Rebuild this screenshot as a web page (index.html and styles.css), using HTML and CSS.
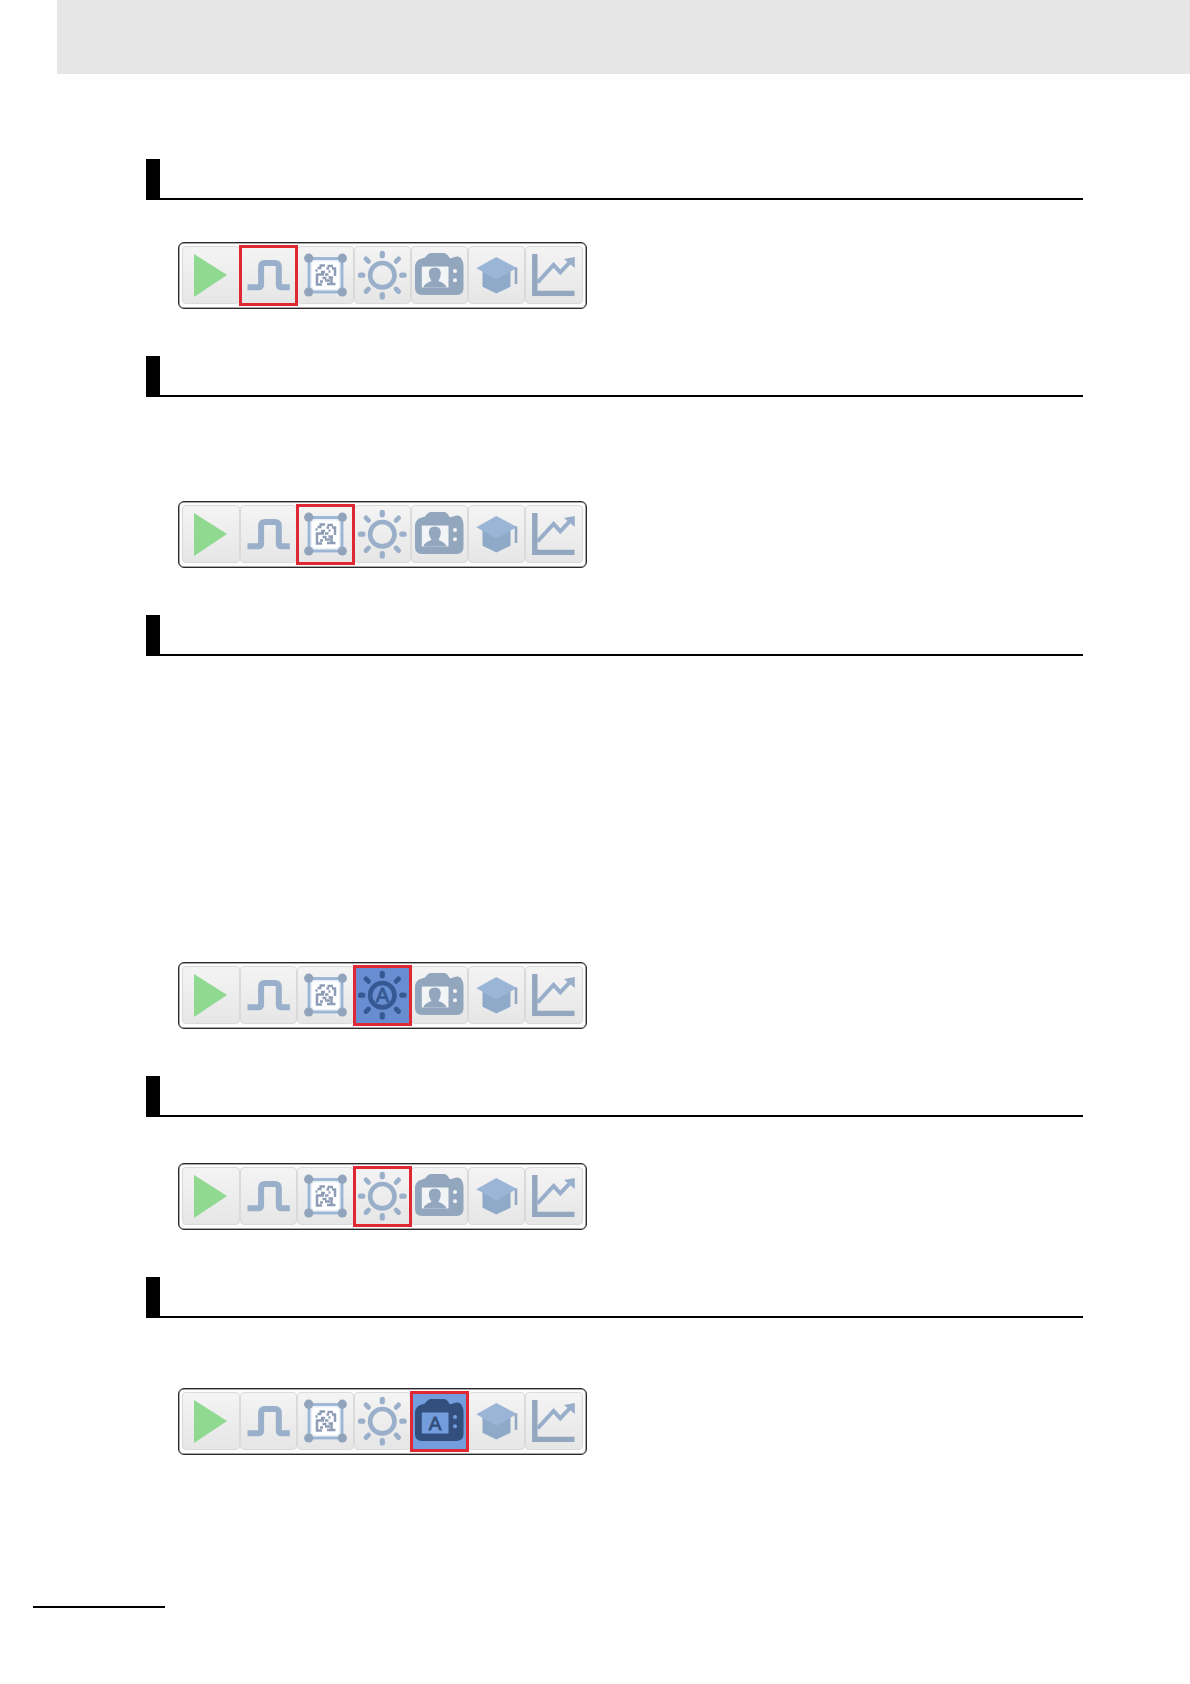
FILE: index.html
```
<!DOCTYPE html>
<html lang="en">
<head>
  <meta charset="UTF-8">
  <meta name="viewport" content="width=device-width, initial-scale=1.0">
  <title>Toolbar</title>
  <link rel="stylesheet" href="styles.css">
</head>
<body>
  <header class="page-header"></header>

  <main class="page-main" id="main">
    <section class="section">
      <div class="heading"></div>
      <div class="toolbar" data-mark="pulse"></div>
    </section>
    <section class="section section-frame">
      <div class="heading"></div>
      <div class="toolbar" data-mark="frame"></div>
    </section>
    <section class="section section-auto-light">
      <div class="heading"></div>
      <div class="toolbar" data-mark="light" data-auto="true"></div>
    </section>
    <section class="section section-light">
      <div class="heading"></div>
      <div class="toolbar" data-mark="light"></div>
    </section>
    <section class="section section-camera">
      <div class="heading"></div>
      <div class="toolbar" data-mark="camera" data-auto="true"></div>
    </section>
  </main>

  <footer class="page-footer"></footer>

  <!-- toolbar icons, one template for each button -->
  <template id="icon-play">
    <svg viewBox="0 0 57 58"><path d="M12 8 45 29 12 51Z" fill="#8fd991"/></svg>
  </template>
  <template id="icon-pulse">
    <svg viewBox="0 0 57 58">
      <path d="M7.5 41.3H18.3Q21.1 41.3 21.1 38.5V21Q21.1 17 25.1 17H34.8Q38.8 17 38.8 21V38.5Q38.8 41.3 41.6 41.3H49.8" fill="none" stroke="currentColor" stroke-width="6"/>
    </svg>
  </template>
  <template id="icon-frame">
    <svg viewBox="0 0 57 58">
      <rect x="12" y="12.5" width="33" height="33.5" fill="#eaf0f6" stroke="#9bb5d5" stroke-width="2.8"/>
      <rect x="15" y="15.5" width="27" height="27.5" rx="4" fill="#fff"/>
      <g fill="#92a4bb">
        <circle cx="11.7" cy="12.2" r="4.6"/><circle cx="45.3" cy="12.2" r="4.6"/>
        <circle cx="11.7" cy="46" r="4.6"/><circle cx="45.3" cy="46" r="4.6"/>
      </g>
      <path d="M22.5 19.5H28M20.5 22H24.5M18.5 24.5H20.5M24 26H28M30.5 20H36M29.5 22.5H32M35 22.5H38V30M19 28.5H27M20 28V38.5H25M31.5 25.5H33.5M28 28.5H31.5M25.5 32H29.5M31.5 31.5H36M28 34.5H33M23 35.5H26M34.5 32V38M30 38H38.5" fill="none" stroke="#8e9db5" stroke-width="2.5"/>
    </svg>
  </template>
  <template id="icon-light">
    <svg viewBox="0 0 57 58">
      <g transform="translate(28.3 29.2)" fill="none" stroke="currentColor">
        <circle r="12.2" stroke-width="4.6"/>
        <g stroke-width="5.2" stroke-linecap="round">
          <path d="M0-21.8V-19.5M0 21.8V19.5M-21.8 0H-19.5M21.8 0H19.5"/>
          <path d="M-16.3-16.3-13.8-13.8M16.3-16.3 13.8-13.8M-16.3 16.3-13.8 13.8M16.3 16.3 13.8 13.8" stroke-width="4.8"/>
        </g>
      </g>
      <text class="auto" x="28.3" y="36.4" font-size="20">A</text>
    </svg>
  </template>
  <template id="icon-camera">
    <svg viewBox="0 0 57 58">
      <path d="M4 21Q4 16 8 13.5L14 11.5Q17 7 20 7H33Q36 7 38.5 12H41Q43 10.5 46 10.5Q50 10.5 51 14Q52.5 16 52.5 21V42Q52.5 49 45.5 49H11Q4 49 4 42Z" fill="currentColor"/>
      <rect class="screen" x="10.8" y="20.5" width="26.7" height="21"/>
      <path class="person" d="M12.5 41.5Q13 37.5 20.5 35Q17.8 31 17.8 27.5Q17.8 21.5 23.8 21.5T29.8 27.5Q29.8 31 27.5 35Q34.5 37.5 35.5 41.5Z" fill="currentColor"/>
      <g class="dots"><circle cx="44" cy="25" r="2"/><circle cx="44" cy="34.3" r="2"/></g>
      <text class="auto" x="24" y="38" font-size="19">A</text>
    </svg>
  </template>
  <template id="icon-learn">
    <svg viewBox="0 0 57 58">
      <path d="M14.5 25H42.5V40.7L28.3 47.5 14.5 40.7Z" fill="#8faac9"/>
      <path d="M8.3 22.3 28.3 11 49 22 28.3 33.5Z" fill="#9bb5d6"/>
      <path d="M48 21.5V38" fill="none" stroke="#94a8c2" stroke-width="2.6"/>
    </svg>
  </template>
  <template id="icon-chart">
    <svg viewBox="0 0 57 58">
      <path d="M9.8 8V47.4H49.5" fill="none" stroke="#93a7c0" stroke-width="5.4"/>
      <path d="M12.5 36.5 28.6 19 35.3 26.3 45.5 15.5" fill="none" stroke="#98aeca" stroke-width="4"/>
      <path d="M39 13 49.8 11V22Z" fill="#98aeca"/>
    </svg>
  </template>

  <script src="toolbar.js"></script>
</body>
</html>
```

FILE: styles.css
```
*,
*::before,
*::after {
  box-sizing: border-box;
}
body {
  margin: 0;
  background-color: #fff;
  font-family: "Liberation Sans", Arial, sans-serif;
}

.page-header {
  height: 74px;
  margin-left: 57px;
  background-color: #e6e6e6;
}
.page-main {
  padding: 85px 107px 0 146px;
}

/* section title bar with the black block on the left */
.section + .section {
  margin-top: 47px;
}
.heading {
  height: 41px;
  margin-bottom: 42px;
  border-left: 14px solid #000;
  background: linear-gradient(#000, #000) bottom / 100% 2px no-repeat;
}
.section-frame .heading {
  margin-bottom: 104px;
}
.section-auto-light .heading {
  margin-bottom: 306px;
}
.section-light .heading {
  margin-bottom: 46px;
}
.section-camera .heading {
  margin-bottom: 70px;
}

.toolbar {
  display: flex;
  width: 409px;
  height: 67px;
  margin-left: 32px;
  padding: 3px 3.4px 4px;
  border: 1px solid #29292b;
  border-radius: 6px;
  background-color: #fcfcfc;
  box-shadow: inset 0 0 0 0.5px #555;
}
.tool {
  position: relative;
  flex: 1;
  height: 58px;
  border: 1px solid #dadada;
  border-radius: 4px;
  background: linear-gradient(#f4f4f4, #e6e6e6);
  color: #9aafca;
}
.tool svg {
  display: block;
  width: 57px;
  height: 58px;
  margin: -1px;
}
.tool-camera {
  color: #92a6be;
}

/* red frame, drawn over the edges of the button */
.is-marked::after {
  content: "";
  position: absolute;
  top: -2px;
  right: -2px;
  bottom: -3px;
  left: -2px;
  z-index: 1;
  border: 3px solid #df2833;
}
.is-auto {
  border-color: #6c90d0;
  background: #688dd0;
  color: #365993;
}
.tool-camera.is-auto {
  background: #739ddd;
  color: #324f7e;
}

.auto {
  display: none;
  fill: currentColor;
  text-anchor: middle;
  stroke: currentColor;
  stroke-width: 0.8px;
}
.is-auto .auto {
  display: block;
}
.is-auto .person {
  display: none;
}
.screen,
.dots {
  fill: #f3f4f5;
}
.is-auto .screen,
.is-auto .dots {
  fill: #739ddd;
}

.page-footer {
  width: 132px;
  height: 2px;
  margin: 151px 0 0 33px;
  background-color: #000;
}
```

FILE: toolbar.js
```
(function() {
  var tools = ['play', 'pulse', 'frame', 'light', 'camera', 'learn', 'chart'];
  var toolbars = document.querySelectorAll('.toolbar');

  toolbars.forEach(function(toolbar) {
    tools.forEach(function(name) {
      var tool = document.createElement('div');
      tool.className = 'tool tool-' + name;
      tool.appendChild(document.getElementById('icon-' + name).content.cloneNode(true));
      if (toolbar.dataset.mark === name) {
        tool.classList.add('is-marked');
        if (toolbar.dataset.auto) {
          tool.classList.add('is-auto');
        }
      }
      toolbar.appendChild(tool);
    });
  });
})();
```
